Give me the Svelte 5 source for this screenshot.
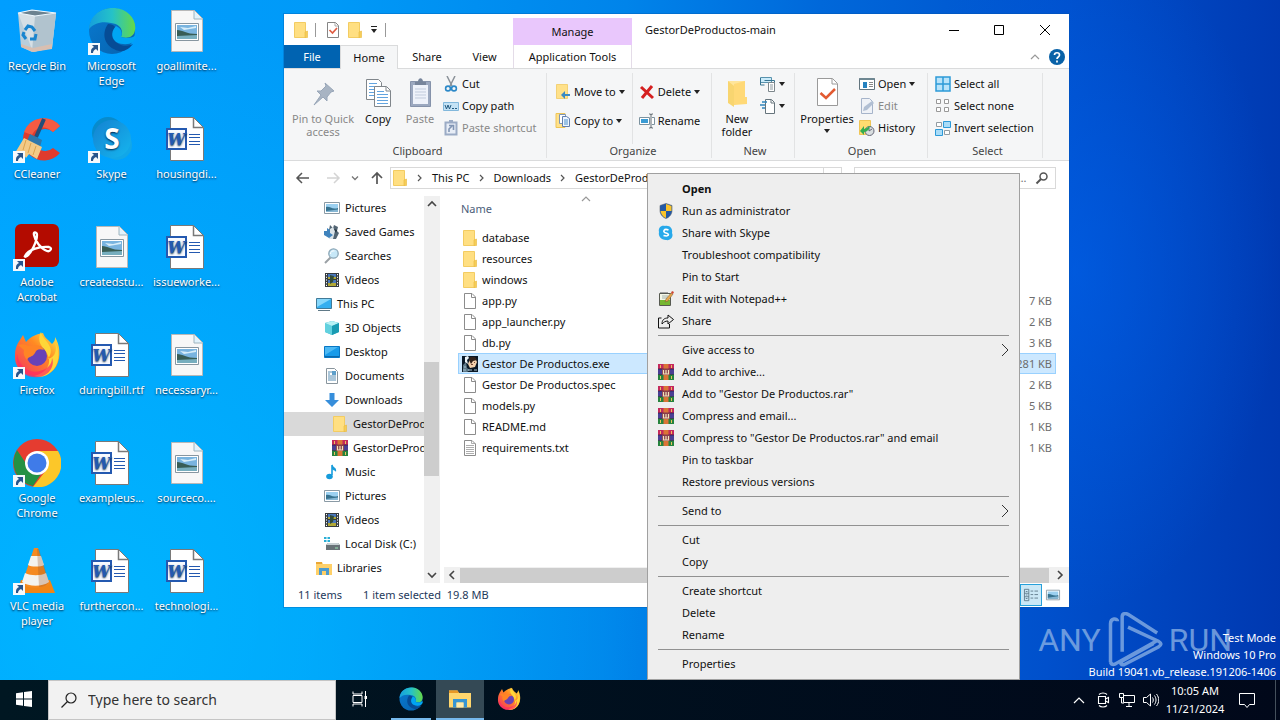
<script lang="ts">
  type Entry = { label: string; icon: string; shortcut?: boolean };
  type MenuEntry = { label?: string; icon?: string; bold?: boolean; more?: boolean; sep?: boolean };

  const shortcuts: Entry[] = [
    { label: 'Recycle Bin', icon: 'bin' },
    { label: 'Microsoft Edge', icon: 'edge', shortcut: true },
    { label: 'goallimite...', icon: 'image' },
    { label: 'CCleaner', icon: 'ccleaner', shortcut: true },
    { label: 'Skype', icon: 'skype', shortcut: true },
    { label: 'housingdi...', icon: 'word' },
    { label: 'Adobe Acrobat', icon: 'acrobat', shortcut: true },
    { label: 'createdstu...', icon: 'image' },
    { label: 'issueworke...', icon: 'word' },
    { label: 'Firefox', icon: 'firefox', shortcut: true },
    { label: 'duringbill.rtf', icon: 'word' },
    { label: 'necessaryr...', icon: 'image' },
    { label: 'Google Chrome', icon: 'chrome', shortcut: true },
    { label: 'exampleus...', icon: 'word' },
    { label: 'sourceco....', icon: 'image' },
    { label: 'VLC media player', icon: 'vlc', shortcut: true },
    { label: 'furthercon...', icon: 'word' },
    { label: 'technologi...', icon: 'word' },
  ];

  const tree = [
    { label: 'Pictures', icon: 'picture', depth: 1 },
    { label: 'Saved Games', icon: 'games', depth: 1 },
    { label: 'Searches', icon: 'searches', depth: 1 },
    { label: 'Videos', icon: 'video', depth: 1 },
    { label: 'This PC', icon: 'pc', depth: 0 },
    { label: '3D Objects', icon: 'cube', depth: 1 },
    { label: 'Desktop', icon: 'desktop', depth: 1 },
    { label: 'Documents', icon: 'documents', depth: 1 },
    { label: 'Downloads', icon: 'download', depth: 1 },
    { label: 'GestorDeProductos-main', icon: 'folder', depth: 2, current: true },
    { label: 'GestorDeProductos-main', icon: 'rar', depth: 2 },
    { label: 'Music', icon: 'music', depth: 1 },
    { label: 'Pictures', icon: 'picture', depth: 1 },
    { label: 'Videos', icon: 'video', depth: 1 },
    { label: 'Local Disk (C:)', icon: 'disk', depth: 1 },
    { label: 'Libraries', icon: 'libraries', depth: 0 },
  ];

  const files = [
    { name: 'database', icon: 'folder', size: '' },
    { name: 'resources', icon: 'folder', size: '' },
    { name: 'windows', icon: 'folder', size: '' },
    { name: 'app.py', icon: 'file', size: '7 KB' },
    { name: 'app_launcher.py', icon: 'file', size: '2 KB' },
    { name: 'db.py', icon: 'file', size: '3 KB' },
    { name: 'Gestor De Productos.exe', icon: 'exe', size: '20,281 KB' },
    { name: 'Gestor De Productos.spec', icon: 'file', size: '2 KB' },
    { name: 'models.py', icon: 'file', size: '5 KB' },
    { name: 'README.md', icon: 'file', size: '1 KB' },
    { name: 'requirements.txt', icon: 'text', size: '1 KB' },
  ];
  let selected = $state('Gestor De Productos.exe');

  const menu: MenuEntry[] = [
    { label: 'Open', bold: true },
    { label: 'Run as administrator', icon: 'shield' },
    { label: 'Share with Skype', icon: 'skypeSmall' },
    { label: 'Troubleshoot compatibility' },
    { label: 'Pin to Start' },
    { label: 'Edit with Notepad++', icon: 'notepad' },
    { label: 'Share', icon: 'share' },
    { sep: true },
    { label: 'Give access to', more: true },
    { label: 'Add to archive...', icon: 'rar' },
    { label: 'Add to "Gestor De Productos.rar"', icon: 'rar' },
    { label: 'Compress and email...', icon: 'rar' },
    { label: 'Compress to "Gestor De Productos.rar" and email', icon: 'rar' },
    { label: 'Pin to taskbar' },
    { label: 'Restore previous versions' },
    { sep: true },
    { label: 'Send to', more: true },
    { sep: true },
    { label: 'Cut' },
    { label: 'Copy' },
    { sep: true },
    { label: 'Create shortcut' },
    { label: 'Delete' },
    { label: 'Rename' },
    { sep: true },
    { label: 'Properties' },
  ];

  // 16x16 glyphs
  const small: Record<string, string> = {
    folder: '<path d="M1.500.5h11v15h-11z" fill="#ffdf82" stroke="#f3cc62"/><path d="M12 10l2.500-1v6.500H12z" fill="#f6cd58" stroke="#e9b93c" stroke-width=".6"/>',
    file: '<path d="M2.500.5h7.500l3.500 3.500v11.500h-11z" fill="#fff" stroke="#8c8c8c"/><path d="M9.500.5v4h4" fill="none" stroke="#8c8c8c"/>',
    text: '<path d="M2.500.5h7.500l3.500 3.500v11.500h-11z" fill="#fff" stroke="#8c8c8c"/><path d="M9.500.5v3h4M4 5.500h8M4 7.500h8M4 9.500h8M4 11.500h8M4 13.500h8" fill="none" stroke="#999" stroke-width=".8"/>',
    exe: '<path d="M0 0h16v16H0z" fill="#0a1826"/><path d="M1 9l3-3 1 6 3 2-3 2H1z" fill="#5c7888"/><path d="M3 1l3-1 1 2-2 2 1 4-3-2z" fill="#eef5f8"/><path d="M8 3l5-1 2 4-2 5-5 1-2-4z" fill="#f3d1ad"/><path d="M8 1h5l2 3-4 1-2 3-2-4z" fill="#33231c"/><path d="M9 8h2v1H9zM12 6h1v1h-1z" fill="#7d4c38"/><path d="M1 14h3M6 14h4M12 14h3M2 11h2" stroke="#a7c2cf"/>',
    picture: '<path d="M.5 2.500h15v11H.5z" fill="#fff" stroke="#8a9aa5"/><path d="M2 4h12v8H2z" fill="#9bd0f0"/><path d="M2 7c4-1 6 3 12 1v4H2z" fill="#36728f"/><path d="M2 11l12-1.500V12H2z" fill="#86b7d4"/>',
    games: '<path d="M6 1l3 3 1-3 4 2-1 4 2 2-3 6H6l-2-4z" fill="#536573"/><path d="M6 5l3-2 2 4-2 8H5z" fill="#dbe4e9"/><path d="M0 7h3V4l3 2v3l3 2-4 3-5-3z" fill="#3f83bd"/><path d="M10 5l3 1-1 3z" fill="#20313c"/>',
    searches: '<path d="M6.500 9.500L1 15" stroke="#9aa0a5" stroke-width="2"/><circle cx="9.500" cy="5.500" r="4.700" fill="#c7e8f8" stroke="#8ca7b7" stroke-width="1.300"/><path d="M6.500 6a3 3 0 014-3" fill="none" stroke="#fff"/>',
    video: '<path d="M1 1h14v14H1z" fill="#353c40"/><path d="M4 2h8v5H4zM4 8h8v6H4z" fill="#4a78bd"/><path d="M4 5h8v2H4zM4 11h8v3H4z" fill="#b2a936"/><path d="M2.500 2v13M13.500 2v13" stroke="#fff" stroke-dasharray="1.200 1.500"/><path d="M6 3l4 1-1 6-3 2z" fill="#314b3a"/>',
    pc: '<path d="M.5 2.500h15v10H.5z" fill="#35aff0" stroke="#417a98"/><path d="M1 3h14L1 11z" fill="#86d7fb"/><path d="M2 14.500h12" stroke="#607987"/>',
    cube: '<path d="M1 3l7-2 7 2v9l-7 3-7-3z" fill="#38b8ca"/><path d="M1 3l7 3v9l-7-3z" fill="#62d1df"/><path d="M1 3l7-2 7 2-7 3z" fill="#b8f1f4"/><path d="M8 6l7-3v9l-7 3z" fill="#199bb2"/>',
    desktop: '<path d="M.5 2.500h15v11H.5z" fill="#189bea" stroke="#0877c4"/><path d="M1 3h13L1 11z" fill="#4db9f4"/><path d="M1 12.500h14" stroke="#0b69ad"/>',
    documents: '<path d="M2.500.5h8l3 3v12h-11z" fill="#fff" stroke="#89959d"/><path d="M4 4h4M4 6h2M4 8h8M4 10h8M4 12h8" stroke="#588eb4"/><path d="M8 3h4v4H8z" fill="#5d9fca"/>',
    download: '<path d="M5.500 1h5v7H15l-7 7-7-7h4.500z" fill="#368edb"/>',
    rar: '<path d="M0 0h16v5H0z" fill="#c4295c"/><path d="M0 5h16v5.500H0z" fill="#4a3f94"/><path d="M0 10.500h16V16H0z" fill="#26833d"/><path d="M0 5h16M0 10.500h16" stroke="#1b1930" stroke-width=".6"/><path d="M5.500 0h5v16h-5z" fill="#db7436"/><path d="M4 4.500h8v6.500H4z" fill="#893d4b"/><path d="M5.500 6v4h5V6M8 6v4" fill="none" stroke="#f2e6bd" stroke-width="1.200"/><path d="M2.500 1v3M13.500 1v3M2.500 12v3M13.500 12v3" stroke="#eac05c"/>',
    music: '<path d="M8 1v10" stroke="#159ddf" stroke-width="1.600"/><path d="M8 0c1 4 5 3 4 8-1-2-4-2-4-3z" fill="#189bd8"/><ellipse cx="5.500" cy="12.500" rx="3.300" ry="2.700" fill="#159bdb"/>',
    disk: '<path d="M2 9l2-2h10l2 2v5H2z" fill="#687277"/><path d="M2 9l2-2h10l2 2z" fill="#c8d1d4"/><path d="M11 12h3" stroke="#98e6b3"/><path d="M0 1h2.500v2H0zM3.500 1H6v2H3.500zM0 4h2.500v2H0zM3.500 4H6v2H3.500z" fill="#2aafd6"/>',
    libraries: '<path d="M0 2h6l1 2h9v11H0z" fill="#ffd068"/><path d="M0 2h6v2H0z" fill="#eaa735"/><path d="M3 8h10v7h-3v-4H6v4H3z" fill="#4d9bce"/>',
    shield: '<path d="M8 .5l6 2v5c0 4-3 7-6 8-3-1-6-4-6-8v-5z" fill="#2459a5" stroke="#58636d" stroke-width=".6"/><path d="M2.500 3L8 1v7H2.500zM8 8h5.500c-.5 3-2.500 6-5.500 7z" fill="#2459a5"/><path d="M8 1l5.500 2v5H8zM2.500 8H8v7c-3-1-5-4-5.500-7z" fill="#fac42b"/>',
    skypeSmall: '<path d="M7 1c5-1 8 3 7 7 2 4-2 8-6 7-5 0-8-4-7-8C0 3 3 0 7 1z" fill="#28a9ea"/><path d="M10.500 5C6 3 4 7 8 8s3 4-2.500 2.500" fill="none" stroke="#fff" stroke-width="1.600"/>',
    notepad: '<path d="M1.500 2.500h11v12h-11z" fill="#f3f6e6" stroke="#575a51"/><path d="M2 9h10v5H2z" fill="#76b731"/><path d="M4 5h6M4 7h5" stroke="#a5b1ac"/><path d="M3 1v2M5 1v2M7 1v2M9 1v2" stroke="#555"/><path d="M7 11l1-3 5-6 2 1-5 7z" fill="#e6a64c" stroke="#755a36" stroke-width=".5"/><path d="M13 2l1-2 2 1-1 2z" fill="#d04633"/>',
    share: '<path d="M3.500 5H.5v10h11v-4M4 11c0-4 2-6 6-6V2l5.500 4.500L10 11V8c-3 0-4 1-6 3z" fill="none" stroke="#111"/>',
    check: '<path d="M2.500.5h8l3 3v12h-11z" fill="#fff" stroke="#858585"/><path d="M10 1v3h3" fill="none" stroke="#aaa"/><path d="M4.500 8l3 3 4.500-5" fill="none" stroke="#df5c42" stroke-width="1.700"/>',
    cut: '<path d="M4 0l5 10M12 0L7 10" stroke="#8b9299" stroke-width="1.500"/><circle cx="5" cy="12.500" r="2.400" fill="none" stroke="#2b88c8" stroke-width="1.600"/><circle cx="11" cy="12.500" r="2.400" fill="none" stroke="#2b88c8" stroke-width="1.600"/>',
    path: '<path d="M.5 4.500h15v8H.5z" fill="#c4e2f5" stroke="#82b8dc"/><path d="M2 7l1.500 4L5 7l1.500 4L8 7M9 10.500h2M12 10.500h2" fill="none" stroke="#245c82"/>',
    pasteLink: '<path d="M2.500 2.500h11v12h-11z" fill="#e7edf6" stroke="#9babc5" stroke-width="2"/><path d="M6 0h4v3H6z" fill="#9babc5"/><path d="M6 12V9l3-3M6 5.500h4.500V10" fill="none" stroke="#8195b4" stroke-width="1.600"/>',
    move: '<path d="M1.500.5h11v14h-11z" fill="#ffe18a" stroke="#efc556" stroke-width=".7"/><path d="M15 12h-5v3l-4-4 4-4v3h5z" fill="#398ac5"/>',
    copyTo: '<path d="M1 .5h9v14H1z" fill="#ffe18a" stroke="#efc556"/><path d="M4.500 1.500h6v9h-6z" fill="#fff" stroke="#7d95b5"/><path d="M7.500 3.500h4l3 2v8h-7z" fill="#edf5ff" stroke="#637fae"/><path d="M9 7h4M9 9h4M9 11h4" stroke="#4b8fca"/>',
    delete: '<path d="M2 3l12 11M13 2L3 14" stroke="#d52020" stroke-width="3"/>',
    rename: '<path d="M.5 4.500h10v7H.5zM13 4.500h2.500v7H13" fill="#fff" stroke="#7c929f"/><path d="M2 6h7v4H2z" fill="#3a9bd4"/><path d="M10 1h1.500l.5 1 .5-1H14M12 1v14M10 15h1.500l.5-1 .5 1H14" fill="none" stroke="#646e75"/>',
    newItem: '<path d="M.5 1.500h11v5H.5z" fill="#caebfa" stroke="#5892ad"/><path d="M.5 2v7h4M4.500 4.500h10v4" fill="none" stroke="#377491"/><path d="M8.500 6.500h6v9h-6z" fill="#fff" stroke="#7d878c"/><path d="M10 9h3M10 11h3M10 13h3" stroke="#8c999f"/>',
    easy: '<path d="M5.500 1.500h6l3 3v11h-9z" fill="#fff" stroke="#66747c"/><path d="M11 2v3h3" fill="none" stroke="#66747c"/><path d="M2 4h5M0 7h5M2 10h3" stroke="#3286bd" stroke-width="1.300"/>',
    open: '<path d="M.5 2.500h15v11H.5z" fill="#fff" stroke="#62747e"/><path d="M.5 3h15" stroke="#6e8792" stroke-width="2"/><path d="M4 6h4v6H4z" fill="#2682bf"/><path d="M10 6.500h4M10 8.500h4M10 10.500h4" stroke="#888"/>',
    edit: '<path d="M2.500.5h8l3 3v12h-11z" fill="#eff2f7" stroke="#a6b4ca"/><path d="M4 13l1-4 8-6 2 2-7 7z" fill="#b1bfd3"/>',
    history: '<path d="M.5.500h11v14H.5z" fill="#ffdc70" stroke="#efc556"/><circle cx="10.500" cy="11" r="4.500" fill="#d9dedf" stroke="#667"/><path d="M10 8v3l3-2" fill="none" stroke="#667"/><path d="M1 11l4-5v3c3 0 4-3 7-3-2 1-2 6-7 6v3z" fill="#34ad50"/>',
    all: '<path d="M1 1h14v14H1z" fill="#b9e3fa" stroke="#2d9ad8" stroke-width="1.500"/><path d="M8 1v14M1 8h14" stroke="#2d9ad8" stroke-width="1.500"/>',
    none: '<path d="M1.500 1.500h4v4h-4zM9.500 1.500h4v4h-4zM1.500 9.500h4v4h-4zM9.500 9.500h4v4h-4z" fill="#fff" stroke="#999"/>',
    invert: '<path d="M1.500 2.500h5v4h-5zM9.500 10.500h5v4h-5z" fill="#fff" stroke="#929ca3"/><path d="M8.500 1.500h7v6h-7zM.5 9.500h7v6h-7z" fill="#a9dcf8" stroke="#2d9ad8"/>',
    details: '<path d="M.5 1.500h5v13h-5zM.5 6h5M.5 10h5M2 4h2M2 8h2M2 12h2M7.500 3.500h3M12 3.500h4M7.500 7.500h3M12 7.500h4M7.500 11.500h3M12 11.500h4" fill="none" stroke="#5c7888"/>',
    back: '<path d="M14 8H2M7 3L2 8l5 5" fill="none" stroke="#555" stroke-width="1.500"/>',
    forward: '<path d="M2 8h12M9 3l5 5-5 5" fill="none" stroke="#d4d4d4" stroke-width="1.500"/>',
    up: '<path d="M8 14V3M3 8l5-5 5 5" fill="none" stroke="#555" stroke-width="1.700"/>',
    down: '<path d="M5 6.500l3 3 3-3" fill="none" stroke="#777" stroke-width="1.300"/>',
    find: '<circle cx="9.500" cy="6.500" r="3.500" fill="none" stroke="#555" stroke-width="1.500"/><path d="M7 9l-4.500 4.500" stroke="#555" stroke-width="2"/>',
    more: '<path d="M9 2l6 6-6 6" fill="none" stroke="#333"/>',
    crumb: '<path d="M6 5l3 3-3 3" fill="none" stroke="#555" stroke-width="1.200"/>',
    scrollUp: '<path d="M4 10l4-4 4 4" fill="none" stroke="#444" stroke-width="1.600"/>',
    scrollDown: '<path d="M4 6l4 4 4-4" fill="none" stroke="#444" stroke-width="1.600"/>',
    scrollLeft: '<path d="M10 4L6 8l4 4" fill="none" stroke="#444" stroke-width="1.600"/>',
    scrollRight: '<path d="M6 4l4 4-4 4" fill="none" stroke="#444" stroke-width="1.600"/>',
    collapse: '<path d="M4 10l4-4 4 4" fill="none" stroke="#999" stroke-width="1.200"/>',
    help: '<circle cx="8" cy="8" r="8" fill="#0962a8"/><path d="M5.500 6c0-3 5-3 5 0 0 2-2.500 2-2.500 4M8 11.500v2" fill="none" stroke="#fff" stroke-width="1.700"/>',
    minimize: '<path d="M4 8.500h10" stroke="#000"/>',
    maximize: '<path d="M3.500 3.500h9v9h-9z" fill="none" stroke="#000"/>',
    close: '<path d="M3 3l10 10M13 3L3 13" stroke="#000"/>',
    start: '<path d="M0 2.200L7 1.300v6.200H0zM8 1.100L16 0v7.500H8zM0 8.500h7v6.200l-7-.9zM8 8.500h8V16l-8-1.100z" fill="#fff"/>',
    loupe: '<circle cx="10" cy="6" r="5" fill="none" stroke="#222" stroke-width="1.200"/><path d="M6.500 9.500L.5 15.500" stroke="#222" stroke-width="1.200"/>',
    taskview: '<path d="M1 .5V3h9V.5M1 15.500V13h9v2.500M1 4.500h9v7H1zM13.500 0v16" fill="none" stroke="#fff"/><path d="M12.500 5h2.500v3h-2.500z" fill="#fff"/>',
    chevron: '<path d="M3 11l5-5 5 5" fill="none" stroke="#fff" stroke-width="1.200"/>',
    meet: '<path d="M3.500 4.500h7v7h-7zM10.500 7l3-1.500v5L10.500 9M4 2.500c2-2 6-2 8 0M4 13.500c2 2 6 2 8 0" fill="none" stroke="#fff" stroke-width="1.100"/>',
    network: '<path d="M4.500 3.500h11v7h-11zM10 11v3M7 14.500h6M2.500 5v6H5" fill="none" stroke="#fff"/><path d="M.5 1.500h4v4h-4z" fill="#03101d" stroke="#fff"/>',
    volume: '<path d="M.5 5.500h3l4-3.500v12l-4-3.500h-3zM9.500 5.500c1 1.500 1 3.500 0 5M11.500 3.500c2 3 2 6 0 9M13.500 2c3 4 3 8 0 12" fill="none" stroke="#fff"/>',
    notice: '<path d="M.5 1.500h15v11h-5l-2.500 3-2.500-3h-5z" fill="none" stroke="#fff"/>',
  };

  // 32x32 ribbon glyphs
  const medium: Record<string, string> = {
    pin: '<path d="M18 6l9 8-3 1-4 5v4l-4-4-9 8 7-10-4-4h4l5-5z" fill="#a8b4c3" stroke="#98a6b8"/>',
    copy: '<path d="M4.500 2.500h12l3 3v17h-15z" fill="#fff" stroke="#80868b"/><path d="M7 6.500h8M7 9.500h8M7 12.500h5M7 15.500h5M7 18.500h5" stroke="#63a4df"/><path d="M12.500 9.500h12l4 4v16h-16z" fill="#fff" stroke="#80868b"/><path d="M24 10v4h4" fill="none" stroke="#80868b"/><path d="M15 14.500h7M15 17.500h11M15 20.500h11M15 23.500h11M15 26.500h11" stroke="#63a4df"/>',
    paste: '<path d="M6.500 4.500h20v25h-20z" fill="#9ba8bf" stroke="#8592aa"/><path d="M9 8h15v19H9z" fill="#eef2fa"/><path d="M11 5h3c0-5 5-5 5 0h3v3H11z" fill="#77859b"/><path d="M11 12h11M11 15h11M11 18h11M11 21h11" stroke="#c1cbdc"/>',
    newFolder: '<path d="M7 4h17v16l2 1v6H13z" fill="#ffe59a"/><path d="M13 7l11-3v16h2v7l-13 1z" fill="#ffd977"/><path d="M7 4l6 5v21l-6-4z" fill="#f8d570"/>',
    properties: '<path d="M6.500 1.500h15l5 5v22h-20z" fill="#fff" stroke="#9a9a9a"/><path d="M21 2v5h5" fill="none" stroke="#9a9a9a"/><path d="M9.500 16l5.500 5L24 12" fill="none" stroke="#e25a31" stroke-width="2.500"/>',
  };

  // 48x48 desktop icons
  const large: Record<string, string> = {
    bin: '<path d="M5 6l14-3 24 3-4 35-20 4-11-5z" fill="#b9cedb"/><path d="M5 6l17 3 21-3-4 35-19 4z" fill="#dce3e7" opacity=".8"/><path d="M22 9l21-3-4 35-20 4z" fill="#9eb4c2" opacity=".65"/><path d="M5 6l14-3 24 3-21 3z" fill="#6b8290" stroke="#eef8ff" stroke-width="1.200"/><path d="M8 37l12 4 19-4v5l-19 3-12-5z" fill="#d8bfb1"/><path d="M12 23l3-4 4 1 3 4M23 27l-1 5h-5M13 32l-3-4 1-3" fill="none" stroke="#1985cf" stroke-width="3"/>',
    edge: '<circle cx="24" cy="24" r="23" fill="url(#edgeBlue)"/><path d="M1 22C2 7 15 0 27 1c13 1 22 12 20 22-1 7-7 9-14 7 3-7-1-13-10-14C14 14 6 16 1 22z" fill="url(#edgeGreen)"/><path d="M20 17c-7 10-4 23 11 27 5 1 10-2 14-7-8 4-17 1-19-6-1-5 2-8 1-11-1-2-4-3-7-3z" fill="#064c96"/><path d="M28 19c-4 4-6 11 0 16 6 3 13 3 17 0 2-2 3-5 3-7-3 3-9 4-15 2 2-4 0-9-5-11z" fill="#00a5f4"/>',
    image: '<path d="M8.500 3.500h23l8 8v33h-31z" fill="#f7f7f7" stroke="#b8b8b8"/><path d="M31 4v8h8" fill="#e0f2fc" stroke="#9eb4be"/><path d="M12.500 16.500h23v17h-23z" fill="#fff" stroke="#8796a0"/><path d="M14 18h20v14H14z" fill="#79b4df"/><path d="M14 23c6 0 9 4 20 4v5H14z" fill="#385d55"/><path d="M14 29l20-1v4H14z" fill="#77aebe"/><path d="M17 20l8 1 8-2v2l-12 2z" fill="#d7edf9"/>',
    word: '<path d="M7.500 2.500h23l10 10v33h-33z" fill="#fff" stroke="#797979"/><path d="M30.500 2.500v10h10" fill="none" stroke="#797979" stroke-width="1.500"/><path d="M3 13h21v22H3z" fill="#2459b0"/><path d="M5 15h17v18H5z" fill="#f8faff"/><text x="13.500" y="30" text-anchor="middle" font-family="DejaVu Serif, serif" font-size="16" font-weight="bold" font-style="italic" fill="#2459b0">W</text><path d="M26 19.500h11M26 22.500h11M26 26.500h11M26 29.500h11" stroke="#2459b0" stroke-width="1.200"/>',
    ccleaner: '<path d="M47 11A21 21 0 1047 38L40 33a11 11 0 110-16z" fill="#df3b2d"/><path d="M47 11A21 21 0 0011 17l8 3c5-10 15-9 21-3z" fill="#f45b43"/><path d="M31 4l-8 18" stroke="#234e79" stroke-width="4"/><path d="M17 19l12 6-2 7-13-6z" fill="#2f78ac"/><path d="M11 23l18 9-5 12-8-5-3 4-4-6-7 1z" fill="#f3ca87"/><path d="M13 25l-3 10M18 28l-3 10M23 31l-3 9" stroke="#dca34d"/>',
    skype: '<circle cx="20" cy="18" r="16" fill="#078bcc"/><circle cx="29" cy="30" r="15" fill="#12a7e8"/><circle cx="24" cy="24" r="19" fill="url(#skypeBlue)"/><text x="24" y="34" text-anchor="middle" font-family="Open Sans, sans-serif" font-size="28" font-weight="bold" fill="#fff">S</text>',
    acrobat: '<rect x="2" y="1" width="44" height="43" rx="6" fill="#b30b00"/><path d="M12 33c3-6 14-10 24-9 4 1 1 5-2 4-6-2-12-10-13-16-1-4 3-3 3 0 0 7-6 18-10 21-1 1-3 1-2 0z" fill="none" stroke="#fff" stroke-width="2.300"/>',
    firefox: '<path d="M5 12l5-8 3 7c5-6 11-8 17-9 2 6 6 7 9 11 3-3 3-4 3-7 5 8 6 19 2 28-4 8-12 12-22 11C8 44 1 35 2 24c0-5 1-8 3-12z" fill="url(#fireOrange)"/><path d="M28 1c1 6 7 9 9 15 2 5 0 9-2 12 8-2 9-10 7-16 6 9 4 23-4 29-4 4-10 6-17 4 16-4 18-16 12-24-3-5-10-10-5-20z" fill="#ffd638"/><circle cx="24" cy="25" r="10" fill="#6842b6"/><path d="M5 14c6-2 8 1 12 1 8-2 12 0 14 4-5-2-8 0-9 3-3 5-7 3-8 7-3-3-4-7-3-10z" fill="#ff8425"/><path d="M4 23c2 13 13 20 23 17 8-2 12-7 12-13 3 7-2 18-14 19C12 48 2 37 4 23z" fill="#ff2c62" opacity=".72"/>',
    chrome: '<circle cx="24" cy="24" r="24" fill="#e53c30"/><path d="M4 11a24 24 0 0016 36l12-18H16z" fill="#249144"/><path d="M24 12h21a24 24 0 01-25 36l14-18z" fill="#fcc729"/><circle cx="24" cy="24" r="12" fill="#fff"/><circle cx="24" cy="24" r="9.500" fill="#3f7be9"/>',
    vlc: '<path d="M8 33L4 46h38l-5-13z" fill="#f18516"/><path d="M21 1h4l11 36c-6 5-21 5-27 0z" fill="#f58a20"/><path d="M18 9h10l3 9c-3 2-13 2-16 0zM12 26c6 3 16 3 21 0l3 9c-7 5-20 5-27 0z" fill="#f4f3ee"/><path d="M26 2h-2l2 38c5 0 8-2 10-5z" fill="#9c5a2a" opacity=".3"/>',
    explorer: '<path d="M2 7h17l3 5h24v29H2z" fill="#ffd66d"/><path d="M2 7h17l3 5H2z" fill="#e99925"/><path d="M10 24h28v17h-7V31H17v10h-7z" fill="#3695d2"/><path d="M17 31h14v10H17z" fill="#ffeaaa"/>',
    anyrun: '<path d="M3 43V10c0-5 6-5 6-2M3 43c1 3 4 2 5 1L42 25M13 34V4c0-3 3-3 5-2l25 16M18 13l26 12c3 2 3 3 0 5L15 45c-3 1-4-1-2-3l27-15" fill="none" stroke="#8eb4e6" stroke-width="3"/>',
  };
</script>

{#snippet icon(name: string)}
  <svg class="icon" viewBox="0 0 16 16" aria-hidden="true">{@html small[name]}</svg>
{/snippet}

{#snippet picture(name: string, set: Record<string, string>, box: number)}
  <svg class="picture" viewBox="0 0 {box} {box}" aria-hidden="true">{@html set[name]}</svg>
{/snippet}

{#snippet command(name: string, label: string, arrow = false, off = false)}
  <button class="command" class:off>
    {@render icon(name)}<span>{label}</span>
    {#if arrow}<i class="arrow"></i>{/if}
  </button>
{/snippet}

<svg class="defs" width="0" height="0" aria-hidden="true">
  <defs>
    <linearGradient id="edgeBlue" x2="1" y2="1"><stop stop-color="#087ad1" /><stop offset="1" stop-color="#0762ad" /></linearGradient>
    <linearGradient id="edgeGreen"><stop stop-color="#159fdd" /><stop offset=".5" stop-color="#25c2c8" /><stop offset="1" stop-color="#65d947" /></linearGradient>
    <linearGradient id="skypeBlue" x2="1" y2="1"><stop stop-color="#1482d1" /><stop offset="1" stop-color="#15b6ef" /></linearGradient>
    <linearGradient id="fireOrange" x1="1" x2="0" y2="1"><stop stop-color="#fff04a" /><stop offset=".4" stop-color="#ff8a22" /><stop offset="1" stop-color="#f52f64" /></linearGradient>
  </defs>
</svg>

<div class="screen">
  <main class="desktop">
    <div class="shortcuts">
      {#each shortcuts as item}
        <button class="shortcut">
          <span class="shortcut-icon">
            {@render picture(item.icon, large, 48)}
            {#if item.shortcut}
              <svg class="badge" viewBox="0 0 12 12" aria-hidden="true">
                <path d="M0 0h12v12H0z" fill="#f5f9fc" />
                <path d="M3 10V8c0-2 1-3 3-4L4 2h6v6L8 6C6 7 5 8 5 10z" fill="#28558c" />
              </svg>
            {/if}
          </span>
          <span>{item.label}</span>
        </button>
      {/each}
    </div>

    <section class="window" aria-label="GestorDeProductos-main">
      <header class="titlebar">
        <div class="quick">
          {@render icon('folder')}<i class="bar"></i>
          <button aria-label="Properties">{@render icon('check')}</button>
          <button aria-label="New folder">{@render icon('folder')}</button>
          <button aria-label="Customize" class="customize"><i class="arrow"></i></button><i class="bar"></i>
        </div>
        <div class="manage">Manage</div>
        <h1>GestorDeProductos-main</h1>
        <div class="controls">
          <button aria-label="Minimize">{@render icon('minimize')}</button>
          <button aria-label="Maximize">{@render icon('maximize')}</button>
          <button aria-label="Close">{@render icon('close')}</button>
        </div>
      </header>

      <nav class="tabs">
        <button class="tab file">File</button>
        <button class="tab home">Home</button>
        <button class="tab">Share</button>
        <button class="tab view">View</button>
        <button class="tab tools">Application Tools</button>
        <span class="tab-end">
          <button aria-label="Collapse ribbon">{@render icon('collapse')}</button>
          <button aria-label="Help">{@render icon('help')}</button>
        </span>
      </nav>

      <div class="ribbon">
        <section class="group clipboard">
          <div class="group-body">
            <button class="big pin off">{@render picture('pin', medium, 32)}<span>Pin to Quick access</span></button>
            <button class="big">{@render picture('copy', medium, 32)}<span>Copy</span></button>
            <button class="big off">{@render picture('paste', medium, 32)}<span>Paste</span></button>
            <div class="stack">
              {@render command('cut', 'Cut')}
              {@render command('path', 'Copy path')}
              {@render command('pasteLink', 'Paste shortcut', false, true)}
            </div>
          </div>
          <h2>Clipboard</h2>
        </section>
        <section class="group organize">
          <div class="group-body">
            <div class="stack loose">
              {@render command('move', 'Move to', true)}
              {@render command('copyTo', 'Copy to', true)}
            </div>
            <div class="stack loose divided">
              {@render command('delete', 'Delete', true)}
              {@render command('rename', 'Rename')}
            </div>
          </div>
          <h2>Organize</h2>
        </section>
        <section class="group new">
          <div class="group-body">
            <button class="big">{@render picture('newFolder', medium, 32)}<span>New folder</span></button>
            <div class="stack">
              <button class="command" aria-label="New item">{@render icon('newItem')}<i class="arrow"></i></button>
              <button class="command" aria-label="Easy access">{@render icon('easy')}<i class="arrow"></i></button>
            </div>
          </div>
          <h2>New</h2>
        </section>
        <section class="group open">
          <div class="group-body">
            <button class="big wide">{@render picture('properties', medium, 32)}<span>Properties</span><i class="arrow"></i></button>
            <div class="stack">
              {@render command('open', 'Open', true)}
              {@render command('edit', 'Edit', false, true)}
              {@render command('history', 'History')}
            </div>
          </div>
          <h2>Open</h2>
        </section>
        <section class="group select">
          <div class="group-body">
            <div class="stack">
              {@render command('all', 'Select all')}
              {@render command('none', 'Select none')}
              {@render command('invert', 'Invert selection')}
            </div>
          </div>
          <h2>Select</h2>
        </section>
      </div>

      <div class="location">
        <div class="history">
          <button aria-label="Back">{@render icon('back')}</button>
          <button aria-label="Forward" class="forward">{@render icon('forward')}</button>
          <button aria-label="Recent locations">{@render icon('down')}</button>
          <button aria-label="Up">{@render icon('up')}</button>
        </div>
        <div class="address">
          {@render icon('folder')}
          {#each ['This PC', 'Downloads', 'GestorDeProductos-main'] as crumb}
            {@render icon('crumb')}<button>{crumb}</button>
          {/each}
          <i class="refresh"></i>
        </div>
        <label class="search">
          <input type="text" aria-label="Search" placeholder="Search GestorDeProductos-main" />
          {@render icon('find')}
        </label>
      </div>

      <div class="body">
        <div class="tree">
          {#each tree as node}
            <button class="node depth-{node.depth}" class:current={node.current}>{@render icon(node.icon)}<span>{node.label}</span></button>
          {/each}
        </div>
        <div class="vscroll">
          {@render icon('scrollUp')}<span></span><i></i><span></span>{@render icon('scrollDown')}
        </div>
        <div class="list">
          <div class="sheet">
            <table>
              <thead>
                <tr><th>Name<span class="sort">{@render icon('collapse')}</span></th><th></th></tr>
              </thead>
              <tbody>
                {#each files as file (file.name)}
                  <tr class:selected={selected === file.name} onclick={() => (selected = file.name)}>
                    <td><span class="name">{@render icon(file.icon)}{file.name}</span></td>
                    <td class="size">{file.size}</td>
                  </tr>
                {/each}
              </tbody>
            </table>
          </div>
          <div class="hscroll">
            {@render icon('scrollLeft')}<i></i>{@render icon('scrollRight')}
          </div>
        </div>
      </div>

      <footer class="status">
        <span>11 items</span><span>1 item selected&nbsp; 19.8 MB</span>
        <div class="views">
          <button aria-label="Details" class="active">{@render icon('details')}</button>
          <button aria-label="Large icons">{@render icon('picture')}</button>
        </div>
      </footer>
    </section>

    <div class="brand">
      <span>ANY</span>{@render picture('anyrun', large, 48)}<span>RUN</span>
    </div>
    <div class="build">
      <span>Test Mode</span><span>Windows 10 Pro</span><span>Build 19041.vb_release.191206-1406</span>
    </div>

    <div class="menu" role="menu">
      {#each menu as item}
        {#if item.sep}
          <hr />
        {:else}
          <button role="menuitem" class:bold={item.bold}>
            <span class="slot">{#if item.icon}{@render icon(item.icon)}{/if}</span>
            <span class="text">{item.label}</span>
            {#if item.more}{@render icon('more')}{/if}
          </button>
        {/if}
      {/each}
    </div>
  </main>

  <footer class="taskbar">
    <button class="task" aria-label="Start">{@render icon('start')}</button>
    <label class="task-search">
      {@render icon('loupe')}
      <input type="text" aria-label="Search Windows" placeholder="Type here to search" />
    </label>
    <button class="task" aria-label="Task View">{@render icon('taskview')}</button>
    <div class="apps">
      <button class="task running" aria-label="Edge">{@render picture('edge', large, 48)}</button>
      <button class="task focused" aria-label="File Explorer">{@render picture('explorer', large, 48)}</button>
      <button class="task" aria-label="Firefox">{@render picture('firefox', large, 48)}</button>
    </div>
    <div class="tray">
      <button aria-label="Hidden icons">{@render icon('chevron')}</button>
      <button aria-label="Meet Now">{@render icon('meet')}</button>
      <button aria-label="Network">{@render icon('network')}</button>
      <button aria-label="Volume">{@render icon('volume')}</button>
      <time datetime="2024-11-21T10:05"><span>10:05 AM</span><span>11/21/2024</span></time>
      <button class="notice" aria-label="Notifications">{@render icon('notice')}</button>
      <i class="peek"></i>
    </div>
  </footer>
</div>

<style>
  :global(body) {
    margin: 0;
  }

  .screen, .screen * {
    box-sizing: border-box;
  }

  .screen {
    display: flex;
    flex-direction: column;
    height: 100vh;
    overflow: hidden;
    font-family: 'Noto Sans', 'Open Sans', sans-serif;
    font-size: 11px;
    line-height: 16px;
    color: #111;
  }

  .defs {
    position: absolute;
  }

  button, input {
    font: inherit;
    color: inherit;
    border: 0;
    padding: 0;
    margin: 0;
    background: transparent;
  }

  h1, h2 {
    margin: 0;
    font-size: 11px;
    font-weight: 400;
  }

  .icon {
    display: block;
    width: 16px;
    height: 16px;
    flex: none;
  }

  .picture {
    display: block;
    flex: none;
    width: 100%;
    height: 100%;
  }

  .arrow {
    flex: none;
    border: 3px solid transparent;
    border-top: 4px solid #222;
    border-bottom: 0;
  }

  /* desktop */
  .desktop {
    position: relative;
    flex: 1;
    min-height: 0;
    background:
      radial-gradient(ellipse 45% 90% at 8% 90%, rgba(0, 186, 255, 0.8), transparent),
      radial-gradient(ellipse 16% 50% at 84% 40%, rgba(0, 100, 240, 0.5), transparent),
      linear-gradient(92deg, #009eff 0%, #009af8 25%, #0084ea 48%, #0068da 63%, #0050cc 82%, #0038b0 100%);
  }

  .shortcuts {
    display: grid;
    grid-template-columns: 74px 75px 75px;
    grid-auto-rows: 108px;
    padding-top: 7px;
  }

  .shortcut {
    display: flex;
    flex-direction: column;
    align-items: center;
    gap: 3px;
    line-height: 15px;
    color: #fff;
    text-shadow: 0 1px 2px #024;
  }

  .shortcut-icon {
    position: relative;
    width: 48px;
    height: 48px;
  }

  .badge {
    position: absolute;
    left: 0;
    bottom: 0;
    width: 12px;
    height: 12px;
  }

  /* explorer window */
  .window {
    position: absolute;
    inset: 14px 211px 73px 284px;
    display: flex;
    flex-direction: column;
    background: #fff;
    box-shadow: 0 0 0 1px rgba(0, 80, 160, 0.3);
  }

  .titlebar {
    display: flex;
    flex: none;
    height: 31px;
  }

  .quick {
    display: flex;
    align-items: center;
    gap: 6px;
    width: 229px;
    padding-left: 9px;
  }

  .bar {
    width: 1px;
    height: 14px;
    margin-right: 3px;
    background: #999;
  }

  .customize {
    display: flex;
    margin: 0 2px;
    padding-top: 2px;
    border-top: 1px solid #222;
  }

  .manage {
    width: 119px;
    margin-top: 4px;
    line-height: 28px;
    text-align: center;
    background: #e9c7fc;
  }

  .titlebar h1 {
    flex: 1;
    padding-left: 13px;
    line-height: 32px;
  }

  .controls {
    display: flex;
    padding-right: 1px;
  }

  .controls button {
    width: 46px;
    padding: 0 15px;
  }

  .tabs {
    display: flex;
    flex: none;
    height: 24px;
    border-bottom: 1px solid #dadbdc;
  }

  .tab {
    width: 58px;
    height: 23px;
  }

  .file {
    width: 56px;
    color: #fff;
    background: #0063b1;
  }

  .home {
    height: 24px;
    background: #f5f6f7;
    border: 1px solid #dadbdc;
    border-bottom: 0;
  }

  .view {
    width: 57px;
  }

  .tools {
    width: 119px;
    border: 1px solid #e4dce8;
    border-width: 0 1px;
  }

  .tab-end {
    display: flex;
    align-items: center;
    gap: 6px;
    margin-left: auto;
    padding-right: 4px;
  }

  .ribbon {
    display: flex;
    flex: none;
    height: 92px;
    padding: 4px 0 2px;
    background: #f5f6f7;
    border-bottom: 1px solid #dadbdc;
  }

  .group {
    display: flex;
    flex-direction: column;
    border-right: 1px solid #e2e3e4;
  }

  .group h2 {
    line-height: 14px;
    text-align: center;
    color: #444;
  }

  .group-body {
    display: flex;
    flex: 1;
  }

  .clipboard { width: 263px; padding-left: 5px; }
  .organize { width: 165px; padding-left: 8px; }
  .new { width: 83px; padding-left: 4px; }
  .open { width: 133px; padding-left: 2px; }
  .select { width: 115px; padding-left: 5px; }

  .big {
    display: flex;
    flex-direction: column;
    align-items: center;
    width: 42px;
    padding-top: 4px;
    line-height: 13px;
  }

  .big .picture {
    width: 32px;
    height: 32px;
    margin-bottom: 3px;
  }

  .big .arrow {
    margin-top: 4px;
  }

  .pin {
    width: 68px;
  }

  .wide {
    width: 60px;
  }

  .off {
    color: #888;
  }

  .stack {
    display: flex;
    flex-direction: column;
    padding-left: 2px;
  }

  .command {
    display: flex;
    align-items: center;
    gap: 3px;
    height: 22px;
    white-space: nowrap;
  }

  .loose {
    gap: 7px;
    padding: 8px 0 0;
  }

  .divided {
    margin-left: 7px;
    padding-left: 6px;
    border-left: 1px solid #e2e3e4;
  }

  .location {
    display: flex;
    flex: none;
    align-items: center;
    height: 34px;
    padding-right: 13px;
  }

  .history {
    display: flex;
    align-items: center;
    gap: 6px;
    width: 106px;
    padding-left: 11px;
  }

  .forward {
    margin-left: 8px;
  }

  .address {
    display: flex;
    flex: 1;
    align-items: center;
    gap: 4px;
    height: 22px;
    padding-left: 1px;
    border: 1px solid #d9d9d9;
  }

  .refresh {
    width: 18px;
    height: 20px;
    margin-left: auto;
    border-left: 1px solid #d9d9d9;
  }

  .search {
    display: flex;
    align-items: center;
    width: 202px;
    height: 22px;
    margin-left: 12px;
    padding: 0 5px;
    border: 1px solid #d9d9d9;
  }

  .search input {
    flex: 1;
    min-width: 0;
    margin-right: 5px;
    padding-left: 24px;
    text-overflow: ellipsis;
  }

  .search input::placeholder {
    color: #6d6d6d;
  }

  .body {
    display: flex;
    flex: 1;
    min-height: 0;
    padding-top: 1px;
  }

  .tree {
    width: 140px;
    overflow: hidden;
  }

  .node {
    display: flex;
    align-items: center;
    gap: 5px;
    width: 100%;
    height: 24px;
    white-space: nowrap;
  }

  .depth-0 { padding-left: 32px; }
  .depth-1 { padding-left: 40px; }
  .depth-2 { padding-left: 48px; }

  .current {
    background: #d9d9d9;
  }

  .vscroll {
    display: grid;
    grid-template-rows: 16px 150fr 114fr 91fr 16px;
    width: 16px;
    background: #f0f0f0;
  }

  .vscroll i {
    width: 15px;
    background: #cdcdcd;
  }

  .list {
    display: flex;
    flex: 1;
    flex-direction: column;
    min-width: 0;
    padding-left: 4px;
  }

  .sheet {
    flex: 1;
    min-height: 0;
    overflow: hidden;
    padding: 0 13px 0 14px;
  }

  table {
    width: 100%;
    border-collapse: collapse;
  }

  th {
    position: relative;
    height: 31px;
    padding: 0 3px 5px;
    font-weight: 400;
    text-align: left;
    color: #4c607a;
  }

  .sort {
    position: absolute;
    top: -5px;
    left: 120px;
  }

  td {
    height: 21px;
    padding: 0 4px;
  }

  .name {
    display: flex;
    align-items: center;
    gap: 4px;
  }

  .size {
    text-align: right;
    color: #6d6d6d;
  }

  .selected {
    background: #cce8ff;
    outline: 1px solid #99d1ff;
    outline-offset: -1px;
  }

  .hscroll {
    display: flex;
    align-items: center;
    height: 16px;
    padding-right: 1px;
    background: #f0f0f0;
  }

  .hscroll i {
    flex: 1;
    height: 15px;
    margin-right: 3px;
    background: #cdcdcd;
  }

  .status {
    display: flex;
    flex: none;
    align-items: center;
    gap: 21px;
    height: 24px;
    padding: 0 5px 0 14px;
    color: #1e395b;
  }

  .views {
    display: flex;
    margin-left: auto;
  }

  .views button {
    display: flex;
    align-items: center;
    justify-content: center;
    width: 22px;
    height: 22px;
  }

  .views .icon {
    height: 14px;
  }

  .views .active {
    background: #cbe8f6;
    border: 1px solid #26a0da;
  }

  /* context menu */
  .menu {
    position: absolute;
    top: 173px;
    left: 647px;
    width: 373px;
    padding: 4px 10px;
    background: #eee;
    border: 1px solid #a0a0a0;
  }

  .menu button {
    display: flex;
    align-items: center;
    width: 100%;
    height: 22px;
    text-align: left;
  }

  .slot {
    width: 24px;
  }

  .text {
    flex: 1;
  }

  .menu hr {
    height: 1px;
    margin: 3px 0;
    border: 0;
    background: #919191;
  }

  .menu .bold {
    font-weight: 700;
  }

  /* desktop watermarks */
  .brand {
    position: absolute;
    right: 48px;
    bottom: 8px;
    display: flex;
    align-items: center;
    gap: 6px;
    font-family: 'Roboto', sans-serif;
    font-size: 32px;
    line-height: 64px;
    color: #8eb4e6;
    opacity: 0.75;
  }

  .brand .picture {
    width: 56px;
    height: 56px;
  }

  .build {
    position: absolute;
    right: 4px;
    bottom: 0;
    display: flex;
    flex-direction: column;
    align-items: flex-end;
    line-height: 17px;
    color: #fff;
  }

  /* taskbar */
  .taskbar {
    display: flex;
    flex: none;
    height: 40px;
    color: #fff;
    background: linear-gradient(90deg, #001722, #01081a);
  }

  .task {
    display: flex;
    align-items: center;
    justify-content: center;
    width: 48px;
    border-bottom: 2px solid transparent;
  }

  .apps {
    display: flex;
    gap: 1px;
    padding-left: 3px;
  }

  .apps .picture {
    width: 24px;
    height: 24px;
  }

  .running {
    width: 40px;
    margin: 0 4px;
    border-bottom-color: #76b9ed;
  }

  .focused {
    background: #344955;
    border-bottom-color: #76b9ed;
  }

  .task-search {
    display: flex;
    align-items: center;
    gap: 11px;
    width: 288px;
    padding-left: 12px;
    background: #f2f2f2;
    border: 1px solid #c5c5c5;
  }

  .task-search input {
    flex: 1;
    font-size: 14px;
  }

  .task-search input::placeholder {
    color: #333;
  }

  .tray {
    display: flex;
    align-items: center;
    margin-left: auto;
  }

  .tray button {
    padding: 0 4px;
  }

  .tray .notice {
    padding: 0 20px 0 12px;
  }

  time {
    display: flex;
    flex-direction: column;
    align-items: center;
    width: 64px;
    line-height: 18px;
  }

  .peek {
    width: 5px;
    height: 40px;
    border-left: 1px solid #45505c;
  }
</style>
